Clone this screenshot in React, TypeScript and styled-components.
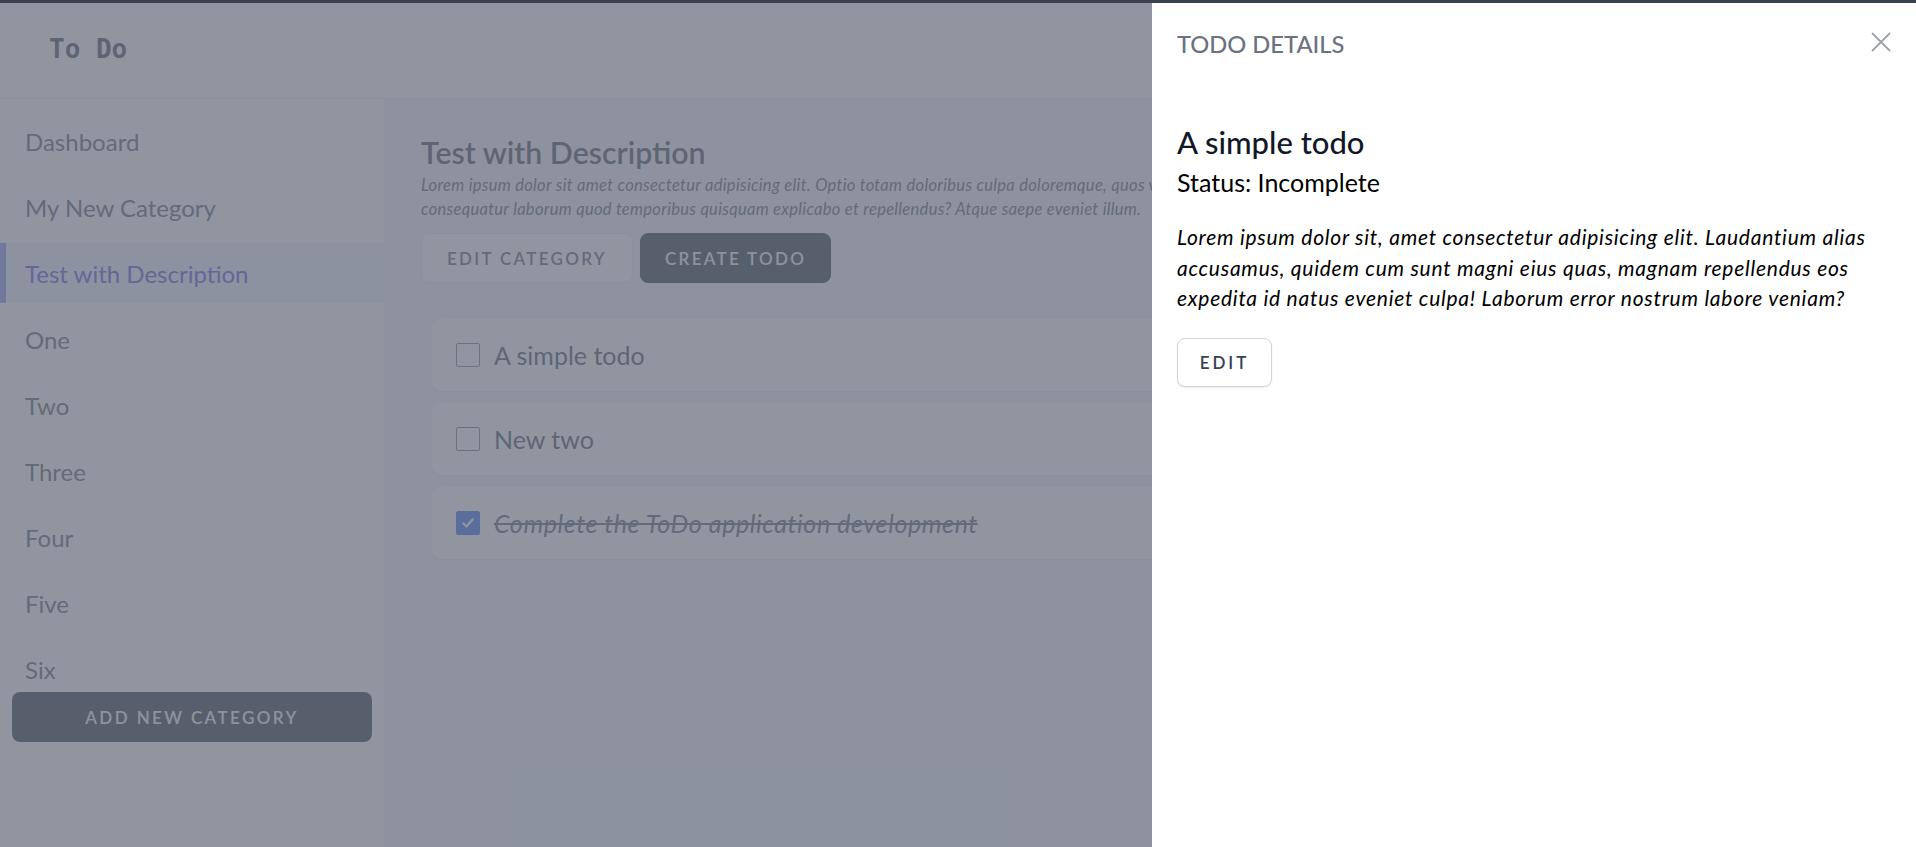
import React from "react";
import styled, { createGlobalStyle, css } from "styled-components";

const Global = createGlobalStyle`
  html, body { margin: 0; padding: 0; height: 100%; overflow: hidden; }
  body { font-family: "Lato", "Noto Sans", sans-serif; background: #ffffff; }
  #root { height: 100%; }
  *, *::before, *::after { box-sizing: border-box; }
`;

const Screen = styled.div`
  height: 100vh;
  display: flex;
  flex-direction: column;
  overflow: hidden;
`;

const TopStrip = styled.div`
  height: 3px;
  flex-shrink: 0;
  background: #3b414f;
`;

const Stage = styled.div`
  position: relative;
  flex: 1;
  min-height: 0;
  overflow: hidden;
`;

const Page = styled.div`
  height: 100%;
  display: flex;
  flex-direction: column;
  background: #ffffff;
`;

const Header = styled.header`
  height: 96px;
  flex-shrink: 0;
  display: flex;
  align-items: center;
  padding: 0 0 4px 49px;
  border-bottom: 1px solid #e5e7eb;
  background: #ffffff;
`;

const Logo = styled.h1`
  margin: 0;
  font-family: "DejaVu Sans Mono", "Liberation Mono", monospace;
  font-weight: 700;
  font-size: 26px;
  line-height: 30px;
  color: #374151;
`;

const Body = styled.div`
  flex: 1;
  min-height: 0;
  display: flex;
`;

const Sidebar = styled.aside`
  width: 384px;
  flex-shrink: 0;
  display: flex;
  flex-direction: column;
  background: #ffffff;
`;

const NavList = styled.nav`
  height: 581px;
  flex-shrink: 0;
  overflow-y: auto;
  padding: 12px 0;
  display: flex;
  flex-direction: column;
  gap: 6px;
  &::-webkit-scrollbar { width: 6px; }
  &::-webkit-scrollbar-thumb { background: #d1d5db; }
  &::-webkit-scrollbar-track { background: #f3f4f6; }
`;

const NavItem = styled.a<{ $active?: boolean }>`
  height: 60px;
  flex-shrink: 0;
  display: flex;
  align-items: center;
  padding-left: 25px;
  font-size: 24px;
  color: #4b5563;
  text-decoration: none;
  ${(p) =>
    p.$active &&
    css`
      background: #eef2ff;
      color: #4f46e5;
      box-shadow: inset 6px 0 0 #818cf8;
    `}
`;

const AddButton = styled.button`
  margin: 12px 12px 0;
  height: 50px;
  border: none;
  border-radius: 8px;
  background: #1f2937;
  color: #f3f4f6;
  font-family: inherit;
  font-size: 17px;
  font-weight: 600;
  letter-spacing: 2.4px;
  text-transform: uppercase;
`;

const Main = styled.main`
  flex: 1;
  min-width: 0;
  background: #f3f4f6;
  padding: 34px 36px 0 37px;
`;

const Title = styled.h2`
  margin: 0;
  font-size: 30.3px;
  line-height: 38px;
  font-weight: 600;
  color: #374151;
`;

const Desc = styled.p`
  margin: 2px 0 0;
  font-size: 16.5px;
  line-height: 24px;
  letter-spacing: 0.3px;
  font-style: italic;
  color: #4b5563;
  white-space: nowrap;
`;

const ButtonRow = styled.div`
  display: flex;
  gap: 7px;
  margin-top: 12px;
`;

const BaseButton = styled.button`
  height: 50px;
  border-radius: 8px;
  font-family: inherit;
  font-size: 17px;
  font-weight: 600;
  letter-spacing: 2.3px;
  text-transform: uppercase;
`;

const OutlineButton = styled(BaseButton)`
  padding: 0 25px;
  background: #ffffff;
  border: 1px solid #e5e7eb;
  color: #4b5563;
`;

const DarkButton = styled(BaseButton)`
  padding: 0 24px;
  background: #1f2937;
  border: 1px solid #1f2937;
  color: #f3f4f6;
`;

const TodoList = styled.ul`
  list-style: none;
  margin: 36px 0 0 11px;
  padding: 0;
  display: flex;
  flex-direction: column;
  gap: 12px;
`;

const TodoCard = styled.li`
  height: 72px;
  display: flex;
  align-items: center;
  gap: 14px;
  padding: 0 24px;
  background: #ffffff;
  border-radius: 10px;
  box-shadow: 0 1px 3px rgba(0, 0, 0, 0.06);
`;

const Box = styled.span<{ $checked?: boolean }>`
  width: 24px;
  height: 24px;
  flex-shrink: 0;
  display: flex;
  align-items: center;
  justify-content: center;
  border: 1.5px solid ${(p) => (p.$checked ? "#2563eb" : "#6b7280")};
  background: ${(p) => (p.$checked ? "#2563eb" : "#ffffff")};
  border-radius: 2px;
`;

const TodoText = styled.span<{ $done?: boolean }>`
  font-size: 25px;
  font-weight: 400;
  color: #374151;
  white-space: nowrap;
  ${(p) =>
    p.$done &&
    css`
      font-style: italic;
      letter-spacing: 0.6px;
      text-decoration: line-through;
      color: #4b5563;
    `}
`;

const Overlay = styled.div`
  position: absolute;
  inset: 0;
  background: rgba(107, 114, 128, 0.75);
`;

const Drawer = styled.aside`
  position: absolute;
  top: 0;
  right: 0;
  bottom: 0;
  width: 764px;
  background: #ffffff;
  padding: 0 24px 0 25px;
  display: flex;
  flex-direction: column;
`;

const DrawerHeader = styled.div`
  display: flex;
  align-items: flex-start;
  justify-content: space-between;
  padding-top: 24px;
  height: 82px;
`;

const DrawerTitle = styled.h3`
  margin: 0;
  font-size: 23.7px;
  line-height: 34px;
  font-weight: 500;
  color: #6b7280;
  text-transform: uppercase;
`;

const CloseButton = styled.button`
  width: 22px;
  height: 22px;
  margin-top: 4px;
  padding: 0;
  border: none;
  background: transparent;
  display: flex;
  align-items: center;
  justify-content: center;
  color: #9ca3af;
`;

const TodoTitle = styled.h2`
  margin: 39px 0 0;
  font-size: 31px;
  line-height: 37px;
  font-weight: 500;
  color: #111827;
`;

const Status = styled.p`
  margin: 6px 0 0;
  font-size: 25px;
  line-height: 30px;
  color: #000000;
`;

const DetailDesc = styled.p`
  margin: 25px 0 0;
  font-size: 21px;
  line-height: 30.5px;
  letter-spacing: 0.75px;
  font-style: italic;
  color: #000000;
`;

const EditButton = styled(BaseButton)`
  margin-top: 24px;
  align-self: flex-start;
  width: 95px;
  height: 49px;
  padding: 0;
  background: #ffffff;
  border: 1px solid #d1d5db;
  box-shadow: 0 1px 2px rgba(0, 0, 0, 0.08);
  color: #374151;
  font-size: 17px;
  letter-spacing: 3px;
`;

const categories = [
  "Dashboard",
  "My New Category",
  "Test with Description",
  "One",
  "Two",
  "Three",
  "Four",
  "Five",
  "Six",
  "Seven",
  "Eight",
  "Nine",
  "Ten",
];

const todos = [
  { text: "A simple todo", done: false },
  { text: "New two", done: false },
  { text: "Complete the ToDo application development", done: true },
];

export default function App() {
  return (
    <Screen>
      <Global />
      <TopStrip />
      <Stage>
        <Page>
          <Header>
            <Logo>To Do</Logo>
          </Header>
          <Body>
            <Sidebar>
              <NavList>
                {categories.map((c) => (
                  <NavItem key={c} $active={c === "Test with Description"}>
                    {c}
                  </NavItem>
                ))}
              </NavList>
              <AddButton>Add new category</AddButton>
            </Sidebar>
            <Main>
              <Title>Test with Description</Title>
              <Desc>
                Lorem ipsum dolor sit amet consectetur adipisicing elit. Optio totam doloribus culpa doloremque, quos
                voluptatem.
                <br />
                consequatur laborum quod temporibus quisquam explicabo et repellendus? Atque saepe eveniet illum.
              </Desc>
              <ButtonRow>
                <OutlineButton>Edit category</OutlineButton>
                <DarkButton>Create todo</DarkButton>
              </ButtonRow>
              <TodoList>
                {todos.map((t) => (
                  <TodoCard key={t.text}>
                    <Box $checked={t.done}>
                      {t.done && (
                        <svg width="14" height="14" viewBox="0 0 14 14" fill="none">
                          <path d="M2.5 7.5 L5.5 10.5 L11.5 3.5" stroke="#ffffff" strokeWidth="2.4" strokeLinecap="round" strokeLinejoin="round" />
                        </svg>
                      )}
                    </Box>
                    <TodoText $done={t.done}>{t.text}</TodoText>
                  </TodoCard>
                ))}
              </TodoList>
            </Main>
          </Body>
        </Page>
        <Overlay />
        <Drawer>
          <DrawerHeader>
            <DrawerTitle>Todo details</DrawerTitle>
            <CloseButton aria-label="Close">
              <svg width="20" height="20" viewBox="0 0 20 20" fill="none">
                <path d="M1.5 1.5 L18.5 18.5 M18.5 1.5 L1.5 18.5" stroke="currentColor" strokeWidth="1.8" strokeLinecap="round" />
              </svg>
            </CloseButton>
          </DrawerHeader>
          <TodoTitle>A simple todo</TodoTitle>
          <Status>Status: Incomplete</Status>
          <DetailDesc>
            Lorem ipsum dolor sit, amet consectetur adipisicing elit. Laudantium alias accusamus, quidem cum sunt magni
            eius quas, magnam repellendus eos expedita id natus eveniet culpa! Laborum error nostrum labore veniam?
          </DetailDesc>
          <EditButton>Edit</EditButton>
        </Drawer>
      </Stage>
    </Screen>
  );
}
